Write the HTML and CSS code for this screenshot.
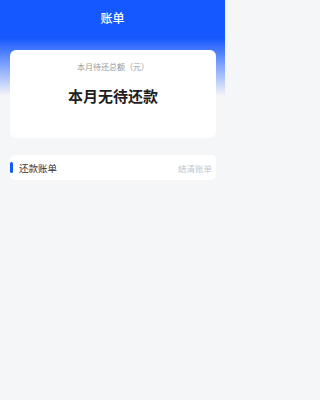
FILE: index.html
```html
<!DOCTYPE html>
<html>
<head>
<meta charset="utf-8">
<link rel="stylesheet" href="styles.css">
</head>
<body>
<div class="page">
  <div class="header">账单</div>
  <div class="summary">
    <div class="label">本月待还总额（元）</div>
    <div class="value">本月无待还款</div>
  </div>
  <div class="section">
    <div class="section-title"><span class="bar"></span>还款账单</div>
    <div class="section-link">结清账单</div>
  </div>
</div>
</body>
</html>
```
FILE: styles.css
```css
html, body {
  margin: 0;
  padding: 0;
}
body {
  font-family: "Noto Sans CJK SC", "Noto Sans", sans-serif;
  background: #f5f6f8;
}
.page {
  width: 225px;
  height: 400px;
  background: linear-gradient(180deg, #1658ff 0px, #1658ff 38px, #f5f6f8 96px, #f5f6f8 400px);
  display: flex;
  flex-direction: column;
  align-items: stretch;
}
.header {
  height: 34px;
  display: flex;
  align-items: center;
  justify-content: center;
  color: #fff;
  font-size: 12px;
  font-weight: 500;
}
.summary {
  margin: 16px 9px 0 10px;
  height: 88px;
  background: #fff;
  border-radius: 6px;
  display: flex;
  flex-direction: column;
  align-items: center;
}
.label {
  margin-top: 11px;
  font-size: 8px;
  color: #9a9a9a;
  line-height: 12px;
}
.value {
  margin-top: 13px;
  font-size: 15px;
  font-weight: 700;
  color: #1e1e1e;
  line-height: 20px;
}
.section {
  margin: 17px 9px 0 10px;
  height: 25px;
  background: #fff;
  border-radius: 5px;
  display: flex;
  align-items: center;
  justify-content: space-between;
}
.section-title {
  display: flex;
  align-items: center;
  font-size: 9.5px;
  color: #333;
}
.bar {
  width: 3px;
  height: 11px;
  background: #1658ff;
  border-radius: 1.5px;
  margin-right: 6px;
}
.section-link {
  font-size: 8.5px;
  color: #c3c6cc;
  margin-right: 4px;
}
```
